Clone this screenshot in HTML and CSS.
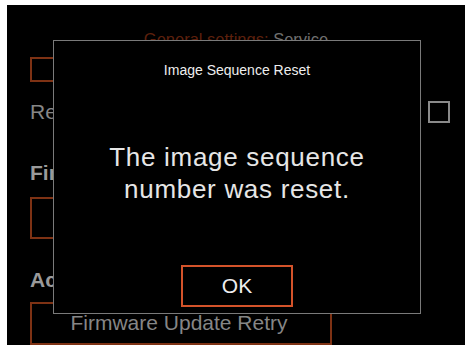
FILE: index.html
```html
<!DOCTYPE html>
<html>
<head>
<meta charset="utf-8">
<link rel="stylesheet" href="styles.css">
</head>
<body>
<div class="screen">
  <div class="page">
    <div class="header"><span class="crumb">General settings:</span> <span class="current">Service</span></div>
    <div class="box box-top"></div>
    <div class="row">
      <span class="label">Reset image sequence number</span>
      <span class="check"></span>
    </div>
    <div class="section">Firmware</div>
    <div class="box box-mid"></div>
    <div class="section section-ac">Actions</div>
    <div class="box box-bottom"><span class="btn-text">Firmware Update Retry</span></div>
  </div>
  <div class="dialog">
    <div class="dialog-title">Image Sequence Reset</div>
    <div class="dialog-msg">The image sequence<br>number was reset.</div>
    <div class="ok">OK</div>
  </div>
</div>
</body>
</html>
```
FILE: styles.css
```css
html, body {
  margin: 0;
  padding: 0;
  background: #fff;
}
body {
  font-family: "Liberation Sans", Arial, sans-serif;
}
.screen {
  position: relative;
  margin: 5px 0 0 7px;
  width: 458px;
  height: 340px;
  background: #000;
  overflow: hidden;
}
.page {
  display: flex;
  flex-direction: column;
  padding-left: 23px;
}
.header {
  margin-top: 23px;
  margin-left: -23px;
  height: 22px;
  line-height: 22px;
  font-size: 16.5px;
  text-align: center;
}
.crumb { color: #5e200d; }
.current { color: #707070; }
.box {
  box-sizing: border-box;
  border: 2px solid #7e3214;
}
.box-top {
  margin-top: 7px;
  width: 300px;
  height: 25px;
}
.row {
  display: flex;
  align-items: center;
  justify-content: space-between;
  margin-top: 19px;
  height: 22px;
  padding-right: 15px;
}
.label {
  font-size: 21px;
  color: #868686;
}
.check {
  box-sizing: border-box;
  width: 22px;
  height: 22px;
  border: 2px solid #8a8a8a;
}
.section {
  margin-top: 38px;
  font-size: 21px;
  font-weight: 700;
  color: #9a9a9a;
  line-height: 24px;
  height: 24px;
}
.box-mid {
  margin-top: 12px;
  width: 300px;
  height: 42px;
}
.section-ac {
  margin-top: 29px;
}
.box-bottom {
  margin-top: 10px;
  width: 302px;
  height: 43px;
  display: flex;
  align-items: flex-start;
  justify-content: center;
}
.btn-text {
  margin-top: 7px;
  margin-right: 4px;
  font-size: 21px;
  line-height: 24px;
  color: #868686;
}
.dialog {
  position: absolute;
  left: 46px;
  top: 35px;
  width: 368px;
  height: 274px;
  box-sizing: border-box;
  border: 1px solid #7a7a7a;
  background: #000;
  display: flex;
  flex-direction: column;
  align-items: center;
}
.dialog-title {
  margin-top: 21px;
  font-size: 14px;
  line-height: 16px;
  color: #eeeeee;
}
.dialog-msg {
  margin-top: 63px;
  font-size: 26px;
  line-height: 32px;
  letter-spacing: 0.7px;
  color: #e6e6e6;
  text-align: center;
}
.ok {
  margin-top: 60px;
  box-sizing: border-box;
  width: 112px;
  height: 42px;
  border: 2px solid #d4532a;
  color: #eeeeee;
  font-size: 21px;
  display: flex;
  align-items: center;
  justify-content: center;
}
```
